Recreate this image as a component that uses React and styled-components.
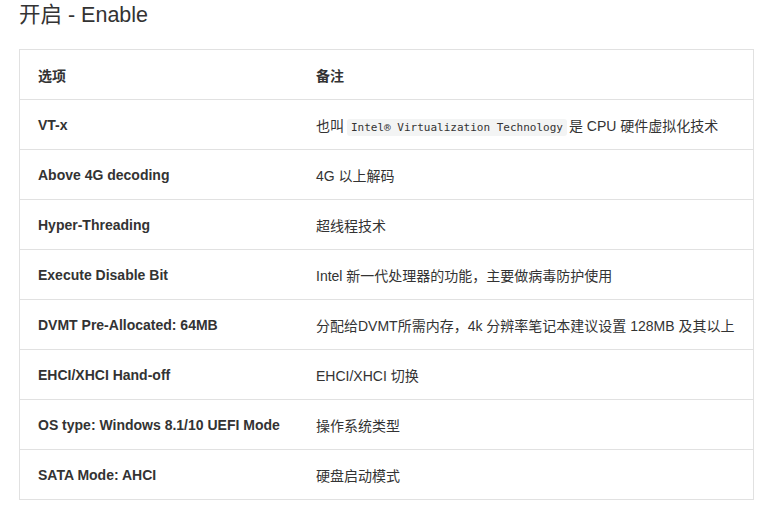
import React from "react";
import styled, { createGlobalStyle } from "styled-components";

const GlobalStyle = createGlobalStyle`
  body {
    margin: 0;
    background: #fff;
    font-family: "Liberation Sans", Arial, "Noto Sans CJK SC", sans-serif;
    color: #333;
  }
`;

const Page = styled.div`
  padding: 2px 5px 0 19px;
`;

const Heading = styled.h2`
  margin: 0 0 21px;
  font-size: 21.5px;
  font-weight: normal;
  line-height: 26px;
  color: #333;
`;

const Table = styled.table`
  width: 100%;
  border-collapse: collapse;
  border: 1px solid #e1e1e1;
  font-size: 14px;
`;

const Row = styled.tr`
  height: 50px;
  border-top: 1px solid #e1e1e1;
  &:first-child {
    border-top: none;
  }
`;

const Cell = styled.td`
  padding: 0 18px;
  vertical-align: middle;
  color: #333;
  font-weight: ${(p) => (p.$bold ? "bold" : "normal")};
  width: ${(p) => p.$width || "auto"};
`;

const Code = styled.code`
  font-family: "DejaVu Sans Mono", "Liberation Mono", monospace;
  font-size: 11px;
  background: #f3f4f4;
  padding: 2px 4px;
  border-radius: 3px;
  margin: 0 2px 0 3px;
`;

const rows = [
  ["VT-x", <>也叫<Code>Intel® Virtualization Technology</Code>是 CPU 硬件虚拟化技术</>],
  ["Above 4G decoding", "4G 以上解码"],
  ["Hyper-Threading", "超线程技术"],
  ["Execute Disable Bit", "Intel 新一代处理器的功能，主要做病毒防护使用"],
  ["DVMT Pre-Allocated: 64MB", "分配给DVMT所需内存，4k 分辨率笔记本建议设置 128MB 及其以上"],
  ["EHCI/XHCI Hand-off", "EHCI/XHCI 切换"],
  ["OS type: Windows 8.1/10 UEFI Mode", "操作系统类型"],
  ["SATA Mode: AHCI", "硬盘启动模式"],
];

const App = () => {
  return (
    <Page>
      <GlobalStyle />
      <Heading>开启 - Enable</Heading>
      <Table>
        <tbody>
          <Row>
            <Cell $bold $width="242px">选项</Cell>
            <Cell $bold>备注</Cell>
          </Row>
          {rows.map(([name, note]) => (
            <Row key={name}>
              <Cell $bold>{name}</Cell>
              <Cell>{note}</Cell>
            </Row>
          ))}
        </tbody>
      </Table>
    </Page>
  );
};

export default App;
